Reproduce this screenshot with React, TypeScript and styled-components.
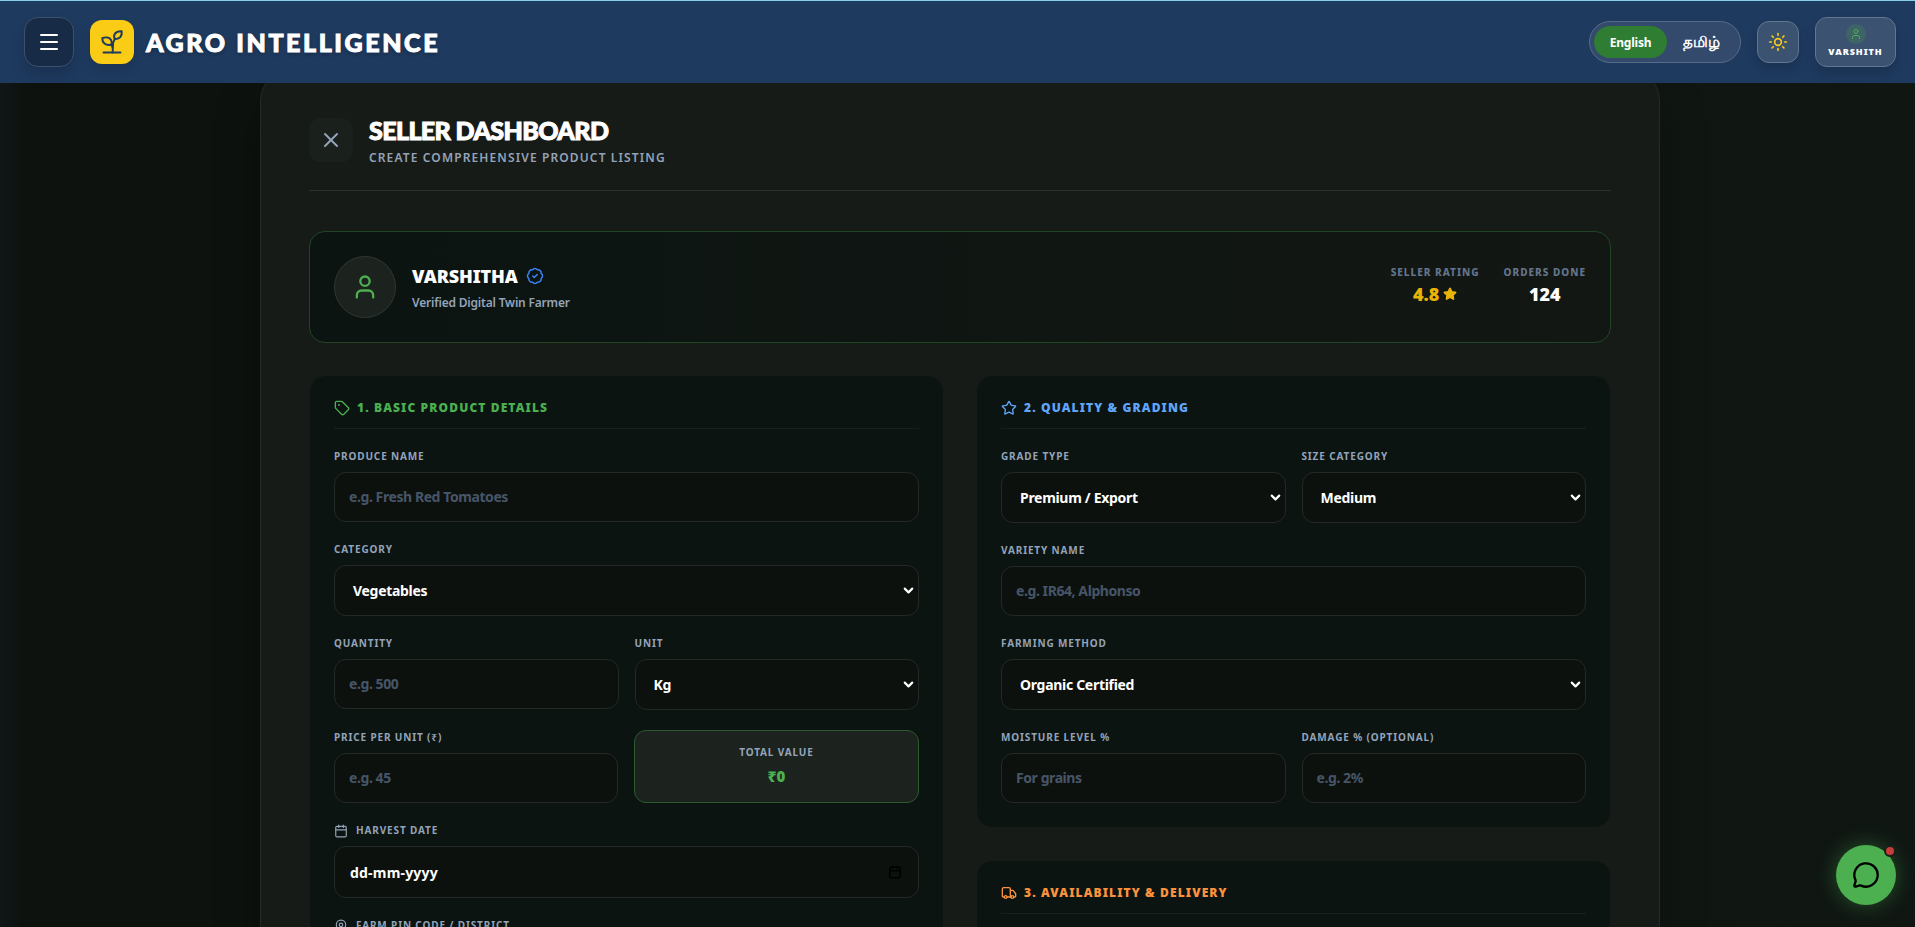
import React from 'react';
import styled, { createGlobalStyle, css } from 'styled-components';
import { Menu, X, User, BadgeCheck, Star, Tag, Calendar, MapPin, Truck, MessageCircle, Sun, ChevronDown } from 'lucide-react';

const Global = createGlobalStyle`
  *, *::before, *::after { box-sizing: border-box; }
  html, body { margin: 0; height: 100%; overflow: hidden; }
  body {
    background: #0e130f;
    color: #fff;
    font-family: 'Noto Sans', 'Open Sans', sans-serif;
  }
  button { font-family: inherit; cursor: pointer; }
`;

const Page = styled.div`
  display: flex;
  flex-direction: column;
  height: 100vh;
  overflow: hidden;
  background: linear-gradient(90deg, #0f1717 0, #0d120e 22px, #0d120e 45%, #101713 100%);
`;

const TopBar = styled.header`
  flex: none;
  display: flex;
  align-items: center;
  justify-content: space-between;
  height: 83px;
  padding: 0 19px 0 24px;
  background: #1e3a5f;
  border-top: 1px solid #87ceeb;
  position: relative;
  z-index: 2;
`;

const Cluster = styled.div<{ $gap: number }>`
  display: flex;
  align-items: center;
  gap: ${(p) => p.$gap}px;
`;

const MenuButton = styled.button`
  display: grid;
  place-items: center;
  width: 50px;
  height: 50px;
  padding: 0;
  color: #fff;
  background: #172b47;
  border: 1px solid #3c506c;
  border-radius: 14px;
  box-shadow: 0 8px 14px rgba(0, 0, 0, 0.14);
`;

const Logo = styled.div`
  display: grid;
  place-items: center;
  width: 44px;
  height: 44px;
  color: #1e3a5f;
  background: #facc15;
  border-radius: 12px;
  box-shadow: 0 6px 12px rgba(0, 0, 0, 0.12);
`;

const Brand = styled.span`
  margin-left: -4px;
  font-family: Lato, sans-serif;
  font-weight: 900;
  font-size: 25px;
  line-height: 32px;
  letter-spacing: 2.6px;
  white-space: nowrap;
  -webkit-text-stroke: 1px #fff;
  text-shadow: 0 2px 4px rgba(0, 0, 0, 0.3);
`;

const LanguageSwitch = styled.div`
  display: flex;
  align-items: center;
  width: 152px;
  height: 42px;
  padding: 4px;
  background: #334a6d;
  border: 1px solid #566b88;
  border-radius: 21px;
`;

const Language = styled.button<{ $active?: boolean }>`
  flex: none;
  width: ${(p) => (p.$active ? 73 : 69)}px;
  height: 32px;
  padding: 0;
  border: 0;
  border-radius: 16px;
  background: ${(p) => (p.$active ? '#2e7d32' : 'transparent')};
  color: #fff;
  font-size: ${(p) => (p.$active ? 12 : 15)}px;
  font-weight: 700;
  letter-spacing: ${(p) => (p.$active ? '-0.2px' : '0')};
`;

const glass = css`
  color: #fff;
  background: #3b5270;
  border: 1px solid #62768f;
  box-shadow: 0 6px 12px rgba(0, 0, 0, 0.14);
`;

const ThemeButton = styled.button`
  ${glass}
  display: grid;
  place-items: center;
  width: 42px;
  height: 42px;
  padding: 0;
  color: #facc15;
  border-radius: 12px;
`;

const ProfileButton = styled.button`
  ${glass}
  display: flex;
  flex-direction: column;
  align-items: center;
  width: 81px;
  height: 50px;
  padding: 6px 0 0;
  border-radius: 12px;
  font-size: 9px;
  font-weight: 900;
  line-height: 12px;
  letter-spacing: 0.95px;
`;

const MiniAvatar = styled.span`
  display: grid;
  place-items: center;
  width: 20px;
  height: 20px;
  margin-bottom: 2px;
  color: #4caf50;
  background: #3e6468;
  border-radius: 50%;
`;

const Main = styled.main`
  flex: 1;
  min-height: 0;
  padding-left: 260px;
`;

const Panel = styled.section`
  width: 1400px;
  height: 1100px;
  margin-top: -14px;
  padding: 48px;
  background: #171b17;
  border: 1px solid #272b27;
  border-radius: 32px;
  box-shadow: 0 25px 50px -12px rgba(0, 0, 0, 0.5);
`;

const PanelHead = styled.div`
  display: flex;
  gap: 16px;
  height: 73px;
  border-bottom: 1px solid #2c302c;
`;

const CloseButton = styled.button`
  display: grid;
  place-items: center;
  width: 44px;
  height: 44px;
  padding: 0;
  color: #94a3b8;
  background: #1a211d;
  border: 0;
  border-radius: 12px;
`;

const PanelTitle = styled.h1`
  margin: -3px 0 0;
  font-family: Lato, sans-serif;
  font-size: 25px;
  font-weight: 900;
  line-height: 30px;
  letter-spacing: -0.6px;
  -webkit-text-stroke: 1px #fff;
`;

const PanelSubtitle = styled.p`
  margin: 4px 0 0;
  color: #94a3b8;
  font-size: 12px;
  font-weight: 600;
  line-height: 18px;
  letter-spacing: 1.12px;
`;

const SellerCard = styled.div`
  display: flex;
  align-items: center;
  justify-content: space-between;
  height: 112px;
  margin-top: 40px;
  padding: 24px;
  background: linear-gradient(90deg, #0b1411, #131713);
  border: 1px solid #1f4524;
  border-radius: 16px;
`;

const Avatar = styled.div`
  display: grid;
  place-items: center;
  width: 62px;
  height: 62px;
  color: #4caf50;
  background: #1c231f;
  border: 1px solid #303632;
  border-radius: 50%;
`;

const SellerName = styled.div`
  display: flex;
  align-items: center;
  gap: 8px;
  font-size: 18px;
  font-weight: 900;
  line-height: 28px;
  letter-spacing: -0.1px;
  svg { color: #3b82f6; }
`;

const SellerNote = styled.div`
  color: #94a3b8;
  font-size: 12px;
  font-weight: 600;
  line-height: 18px;
  letter-spacing: -0.19px;
  margin-top: 4px;
`;

const Stat = styled.div`
  display: flex;
  flex-direction: column;
  align-items: center;
`;

const StatLabel = styled.span`
  margin-top: -1px;
  color: #64748b;
  font-size: 10px;
  font-weight: 800;
  line-height: 15px;
  letter-spacing: 1px;
  white-space: nowrap;
`;

const StatValue = styled.span<{ $color: string }>`
  display: flex;
  align-items: center;
  gap: 4px;
  color: ${(p) => p.$color};
  font-size: 18px;
  font-weight: 900;
  line-height: 28px;
`;

const Columns = styled.div`
  display: grid;
  grid-template-columns: 1fr 1fr;
  align-items: start;
  gap: 32px;
  margin-top: 32px;
`;

const Stack = styled.div`
  display: flex;
  flex-direction: column;
  gap: 32px;
`;

const Card = styled.section`
  display: flex;
  flex-direction: column;
  gap: 20px;
  padding: 24px;
  background: #0b1411;
  border: 1px solid #151d19;
  border-radius: 16px;
`;

const CardHeading = styled.h2<{ $color: string }>`
  display: flex;
  align-items: center;
  gap: 7px;
  height: 29px;
  margin: 0;
  padding-bottom: 12px;
  border-bottom: 1px solid #17201c;
  color: ${(p) => p.$color};
  font-size: 12px;
  font-weight: 900;
  line-height: 16px;
  letter-spacing: 1.12px;
`;

const Row = styled.div<{ $columns?: string }>`
  display: grid;
  grid-template-columns: ${(p) => p.$columns ?? '1fr 1fr'};
  gap: 16px;
  align-items: start;
`;

const Field = styled.label`
  display: block;
  min-width: 0;
`;

const Label = styled.span`
  display: flex;
  align-items: center;
  gap: 8px;
  height: 15px;
  margin-bottom: 8px;
  color: #94a3b8;
  font-size: 10px;
  font-weight: 700;
  line-height: 15px;
  letter-spacing: 0.86px;
  white-space: nowrap;
`;

const control = css`
  width: 100%;
  background: #0d110d;
  border: 1px solid #252925;
  border-radius: 12px;
  color: #fff;
  font-family: inherit;
  font-size: 14px;
  font-weight: 700;
`;

const Input = styled.input`
  ${control}
  display: block;
  height: 50px;
  padding: 0 14px 1px;
  outline: 0;
  letter-spacing: -0.42px;
  &::placeholder { color: #475569; opacity: 1; }
`;

const SelectBox = styled.div`
  ${control}
  display: flex;
  align-items: center;
  justify-content: space-between;
  height: 51px;
  padding: 0 2px 0 18px;
  letter-spacing: -0.3px;
  svg { flex: none; }
`;

const DateBox = styled(SelectBox)`
  height: 52px;
  padding: 0 16px 0 15px;
  letter-spacing: 0.2px;
  svg { color: #000; }
`;

const TotalBox = styled.div`
  display: flex;
  flex-direction: column;
  align-items: center;
  height: 73px;
  padding-top: 14px;
  background: #1c231f;
  border: 1px solid #2a5a2e;
  border-radius: 12px;
`;

const TotalLabel = styled(Label)`
  margin-bottom: 4px;
`;

const TotalValue = styled.span`
  color: #4caf50;
  font-size: 15px;
  font-weight: 900;
  line-height: 24px;
`;

const ChatButton = styled.button`
  position: fixed;
  right: 19px;
  bottom: 22px;
  z-index: 3;
  display: grid;
  place-items: center;
  width: 60px;
  height: 60px;
  padding: 0;
  color: #000;
  background: #4caf50;
  border: 0;
  border-radius: 50%;
  box-shadow: 0 0 20px rgba(76, 175, 80, 0.4);
`;

const UnreadDot = styled.span`
  position: absolute;
  top: 0;
  right: 0;
  width: 12px;
  height: 12px;
  background: #c83c3c;
  border: 2px solid #162018;
  border-radius: 50%;
`;

function SeedlingIcon() {
  return (
    <svg width="44" height="44" viewBox="0 0 44 44" fill="none" stroke="currentColor" strokeWidth="2" strokeLinecap="round" strokeLinejoin="round">
      <path d="M13.5 32.5h17" />
      <path d="M22.6 32.5c.9-3.2 0-5.400-.9-8" />
      <path d="M22.800 27.500c-.2-3.200.3-6 2-8.700" />
      <path d="M12.300 18.200c3.200-1.400 6.900-1 8.500 1.300 1 1.500 1.100 3.200.9 5-2.600.8-5.300.5-7.200-1.100-1.600-1.300-2.300-3-2.200-5.200z" />
      <path d="M31.700 11.300c-2.900-.2-5.400.6-6.700 2.400-1.100 1.500-1.200 3.300-.3 5.100 2.400.3 4.300-.2 5.600-1.700 1.300-1.500 1.700-3.500 1.400-5.800z" />
    </svg>
  );
}

function TextField({ label, hint, icon }: { label: string; hint: string; icon?: React.ReactNode }) {
  return (
    <Field>
      <Label>{icon}{label}</Label>
      <Input placeholder={hint} />
    </Field>
  );
}

function SelectField({ label, value }: { label: string; value: string }) {
  return (
    <Field as="div">
      <Label>{label}</Label>
      <SelectBox role="combobox">
        {value}
        <ChevronDown size={15} strokeWidth={3.4} />
      </SelectBox>
    </Field>
  );
}

export default function App() {
  return (
    <Page>
      <Global />
      <TopBar>
        <Cluster $gap={16}>
          <MenuButton aria-label="Menu"><Menu size={24} /></MenuButton>
          <Logo><SeedlingIcon /></Logo>
          <Brand>AGRO INTELLIGENCE</Brand>
        </Cluster>
        <Cluster $gap={16}>
          <LanguageSwitch>
            <Language $active>English</Language>
            <Language>தமிழ்</Language>
          </LanguageSwitch>
          <ThemeButton aria-label="Theme"><Sun size={20} /></ThemeButton>
          <ProfileButton>
            <MiniAvatar><User size={12} /></MiniAvatar>
            VARSHITH
          </ProfileButton>
        </Cluster>
      </TopBar>
      <Main>
        <Panel>
          <PanelHead>
            <CloseButton aria-label="Close"><X size={24} /></CloseButton>
            <div>
              <PanelTitle>SELLER DASHBOARD</PanelTitle>
              <PanelSubtitle>CREATE COMPREHENSIVE PRODUCT LISTING</PanelSubtitle>
            </div>
          </PanelHead>
          <SellerCard>
            <Cluster $gap={16}>
              <Avatar><User size={28} /></Avatar>
              <div>
                <SellerName>VARSHITHA <BadgeCheck size={18} /></SellerName>
                <SellerNote>Verified Digital Twin Farmer</SellerNote>
              </div>
            </Cluster>
            <Cluster $gap={24}>
              <Stat>
                <StatLabel>SELLER RATING</StatLabel>
                <StatValue $color="#eab308">4.8 <Star size={14} fill="currentColor" /></StatValue>
              </Stat>
              <Stat>
                <StatLabel>ORDERS DONE</StatLabel>
                <StatValue $color="#fff">124</StatValue>
              </Stat>
            </Cluster>
          </SellerCard>
          <Columns>
            <Card>
              <CardHeading $color="#4caf50"><Tag size={16} />1. BASIC PRODUCT DETAILS</CardHeading>
              <TextField label="PRODUCE NAME" hint="e.g. Fresh Red Tomatoes" />
              <SelectField label="CATEGORY" value="Vegetables" />
              <Row>
                <TextField label="QUANTITY" hint="e.g. 500" />
                <SelectField label="UNIT" value="Kg" />
              </Row>
              <Row $columns="284px 1fr">
                <TextField label="PRICE PER UNIT (₹)" hint="e.g. 45" />
                <TotalBox>
                  <TotalLabel>TOTAL VALUE</TotalLabel>
                  <TotalValue>₹0</TotalValue>
                </TotalBox>
              </Row>
              <Field as="div">
                <Label><Calendar size={14} />HARVEST DATE</Label>
                <DateBox>dd-mm-yyyy<Calendar size={14} strokeWidth={2.5} /></DateBox>
              </Field>
              <TextField label="FARM PIN CODE / DISTRICT" hint="e.g. 641001" icon={<MapPin size={14} />} />
            </Card>
            <Stack>
              <Card>
                <CardHeading $color="#60a5fa"><Star size={16} />2. QUALITY &amp; GRADING</CardHeading>
                <Row>
                  <SelectField label="GRADE TYPE" value="Premium / Export" />
                  <SelectField label="SIZE CATEGORY" value="Medium" />
                </Row>
                <TextField label="VARIETY NAME" hint="e.g. IR64, Alphonso" />
                <SelectField label="FARMING METHOD" value="Organic Certified" />
                <Row>
                  <TextField label="MOISTURE LEVEL %" hint="For grains" />
                  <TextField label="DAMAGE % (OPTIONAL)" hint="e.g. 2%" />
                </Row>
              </Card>
              <Card>
                <CardHeading $color="#fb923c"><Truck size={16} />3. AVAILABILITY &amp; DELIVERY</CardHeading>
              </Card>
            </Stack>
          </Columns>
        </Panel>
      </Main>
      <ChatButton aria-label="Chat">
        <MessageCircle size={28} />
        <UnreadDot />
      </ChatButton>
    </Page>
  );
}
